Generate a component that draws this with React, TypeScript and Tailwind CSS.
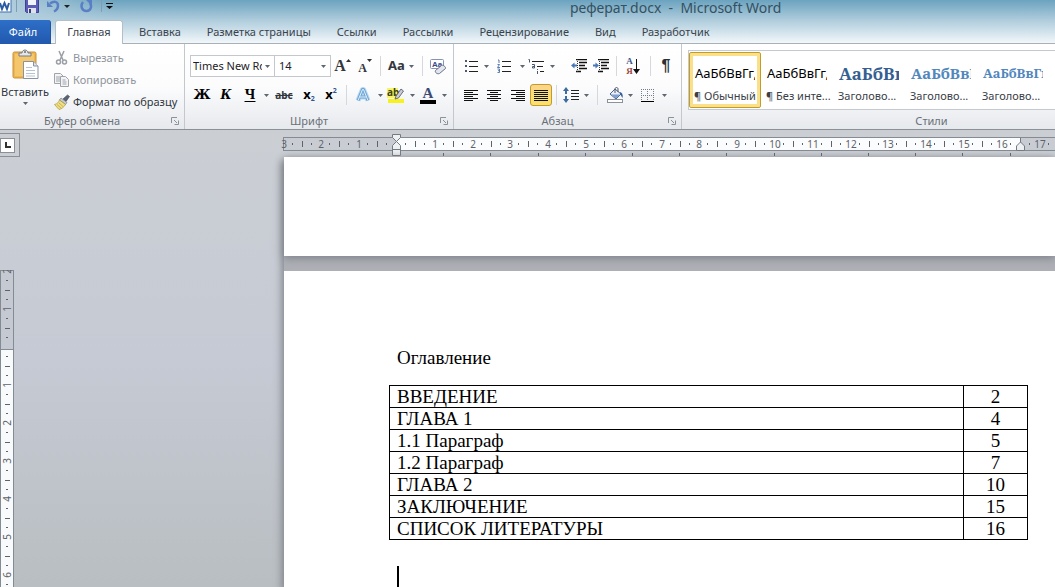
import type { ReactNode } from 'react';

const tabs = ['Вставка', 'Разметка страницы', 'Ссылки', 'Рассылки', 'Рецензирование', 'Вид', 'Разработчик'];

const tocRows = [
  { title: 'ВВЕДЕНИЕ', page: 2 },
  { title: 'ГЛАВА 1', page: 4 },
  { title: '1.1 Параграф', page: 5 },
  { title: '1.2 Параграф', page: 7 },
  { title: 'ГЛАВА 2', page: 10 },
  { title: 'ЗАКЛЮЧЕНИЕ', page: 15 },
  { title: 'СПИСОК ЛИТЕРАТУРЫ', page: 16 },
];

const plain = "text-[13px] text-black";
const styles = [
  { sample: 'АаБбВвГг,', label: '¶ Обычный', look: plain, active: true },
  { sample: 'АаБбВвГг,', label: '¶ Без инте...', look: plain, active: false },
  { sample: 'АаБбВв', label: 'Заголово...', look: "font-['Noto_Serif','DejaVu_Serif','Liberation_Serif',serif] text-[17px] font-bold text-[#365f91]", active: false },
  { sample: 'АаБбВвГ', label: 'Заголово...', look: "font-['Noto_Serif','DejaVu_Serif','Liberation_Serif',serif] text-[15px] font-bold text-[#5287bd]", active: false },
  { sample: 'АаБбВвГг', label: 'Заголово...', look: "font-['Noto_Serif','DejaVu_Serif','Liberation_Serif',serif] text-[13px] font-bold text-[#5287bd]", active: false },
];

function Caret() {
  return (
    <svg width="5" height="3" viewBox="0 0 5 3" className="shrink-0">
      <path d="M0 0h5L2.5 3z" fill="#5f666e" />
    </svg>
  );
}

function DropButton({ label }: { label: string }) {
  return (
    <button aria-label={label} className="flex h-6 w-2 shrink-0 items-center justify-center">
      <Caret />
    </button>
  );
}

function Tool({ label, width = 'w-6', active = false, children }: { label: string; width?: string; active?: boolean; children: ReactNode }) {
  return (
    <button
      aria-label={label}
      className={`flex h-[22px] shrink-0 items-center justify-center ${width} ${active ? 'rounded-[3px] border border-[#c29b29] bg-gradient-to-b from-[#fbd58b] to-[#fbe069]' : ''}`}
    >
      {children}
    </button>
  );
}

function Sep({ width = 'w-2' }: { width?: string }) {
  return (
    <div className={`flex shrink-0 justify-center ${width}`}>
      <div className="h-5 w-px bg-[#d5d9dd]" />
    </div>
  );
}

function Group({ title, className, launcher = true, children }: { title: string; className: string; launcher?: boolean; children: ReactNode }) {
  return (
    <section className={`flex shrink-0 flex-col border-r border-[#c3c8ce] ${className}`}>
      <div className="h-[70px]">{children}</div>
      <div className="flex h-4 items-center text-[#6a7078]">
        <h2 className="flex-1 text-center">{title}</h2>
        {launcher && (
          <button aria-label={`${title}: параметры`} className="flex w-5 justify-end pr-[5px]">
            <svg width="8" height="8" viewBox="0 0 8 8" fill="none" stroke="#8b929a">
              <path d="M.5 6V.5H6M3 3l3 3M7.5 3.5v4h-4" />
            </svg>
          </button>
        )}
      </div>
    </section>
  );
}

// rows of text in the alignment buttons: [x, width]
function AlignIcon({ lines }: { lines: number[][] }) {
  return (
    <svg width="14" height="13" viewBox="0 0 14 13" shapeRendering="crispEdges">
      {lines.map(([x, w], i) => (
        <rect key={i} x={x} y={i * 2 + 1} width={w} height="1" fill="#111" />
      ))}
    </svg>
  );
}

function PasteIcon() {
  return (
    <svg width="27" height="31" viewBox="0 0 27 31">
      <rect x="1" y="3" width="23" height="26" rx="1.5" fill="#efb752" stroke="#c98f36" />
      <rect x="3" y="5" width="19" height="22" fill="#f5c76c" />
      <path d="M7 7V4h3c0-4 6-4 6 0h3v3z" fill="#e4e6e8" stroke="#767b82" />
      <circle cx="13" cy="3" r="1" fill="#6c7076" />
      <path d="M11.5 12.500h10l4.500 4.500v12.500h-14.500z" fill="#fff" stroke="#8792a3" />
      <path d="M21.500 12.500v4.500h4.500" fill="#dde3ee" stroke="#8792a3" />
      <path d="M14 18.500h6M14 21.500h9M14 24.500h9M14 27h9" stroke="#b6c2d6" />
    </svg>
  );
}

function ClipboardGroup() {
  return (
    <Group title="Буфер обмена" className="w-[185px]">
      <div className="flex">
        <button className="flex w-[50px] flex-col items-center pt-[5px] text-[#2f353d]">
          <PasteIcon />
          <span className="h-[18px] pt-1 leading-4">Вставить</span>
          <span className="mt-1"><Caret /></span>
        </button>
        <div className="flex flex-col items-start pt-[3px] pl-1">
          <button className="flex h-[22px] items-center gap-[3px] text-[#8f959c]">
            <svg width="16" height="16" viewBox="0 0 16 16" fill="none" stroke="#9a9fa6" strokeWidth="1.5">
              <path d="M5 1l4 9M10 1L6 10" />
              <circle cx="4.500" cy="12" r="2" />
              <circle cx="10.500" cy="12" r="2" />
            </svg>
            Вырезать
          </button>
          <button className="flex h-[22px] items-center gap-[3px] text-[#8f959c]">
            <svg width="16" height="16" viewBox="0 0 16 16" fill="#f3f4f5" stroke="#a0a4aa">
              <path d="M.5 1.500h6l3 3v7h-9z" />
              <path d="M2 5h4M2 7h4M2 9h4" />
              <path d="M6.500 4.500h5l3 3v7h-8z" />
              <path d="M8.500 8h3M8.500 10h4M8.500 12h4" />
            </svg>
            Копировать
          </button>
          <button className="flex h-[22px] items-center gap-[3px] text-[#2f353d]">
            <svg width="16" height="16" viewBox="0 0 16 16">
              <path d="M9 5l4.500-4 2 1.500L12 7.500z" fill="#5a6274" stroke="#3e4350" strokeWidth=".6" />
              <path d="M7 4l6 4.500-1.500 2L5.500 6z" fill="#c7cbd2" stroke="#666b74" strokeWidth=".6" />
              <path d="M5.500 6l6 4.500C10 13 7.500 15 5 15.500L.5 10.500C3 10 4.500 8.500 5.500 6z" fill="#f0e084" stroke="#a8933c" strokeWidth=".7" />
              <path d="M3 10.500l4 3.500M5 9l4 3.500" stroke="#c0a744" strokeWidth=".8" />
            </svg>
            Формат по образцу
          </button>
        </div>
      </div>
    </Group>
  );
}

function FontGroup() {
  return (
    <Group title="Шрифт" className="w-[269px]">
      <div className="pt-[11px] pl-[5px] text-black">
        <div className="flex h-[22px] items-center">
          <label className="relative flex">
            <select aria-label="Шрифт" className="h-[22px] w-[85px] appearance-none overflow-hidden border border-[#c3c8ce] bg-white pr-3 pl-[2px] text-[11px] text-[#1d2126]">
              <option>Times New Roman</option>
            </select>
            <span className="pointer-events-none absolute top-[10px] right-[5px] flex"><Caret /></span>
          </label>
          <label className="relative flex">
            <select aria-label="Размер шрифта" className="h-[22px] w-14 appearance-none border border-l-0 border-[#c3c8ce] bg-white pr-3 pl-1 text-[11px] text-[#1d2126]">
              <option>14</option>
            </select>
            <span className="pointer-events-none absolute top-[10px] right-[5px] flex"><Caret /></span>
          </label>
          <Tool label="Увеличить размер" width="w-[23px]">
            <span className="font-['Liberation_Serif',serif] text-[16px] font-bold text-[#33373d]">A</span>
            <svg width="5" height="3" viewBox="0 0 5 3" className="mb-3"><path d="M0 3h5L2.500 0z" fill="#333" /></svg>
          </Tool>
          <Tool label="Уменьшить размер" width="w-[22px]">
            <span className="pt-1 font-['Liberation_Serif',serif] text-[12px] font-bold text-[#33373d]">A</span>
            <svg width="5" height="3" viewBox="0 0 5 3" className="mb-3"><path d="M0 0h5L2.500 3z" fill="#333" /></svg>
          </Tool>
          <Sep />
          <Tool label="Регистр" width="w-[34px]">
            <span className="mr-1 text-[13px] font-bold text-[#33373d]">Aa</span>
            <Caret />
          </Tool>
          <Sep />
          <Tool label="Очистить формат">
            <svg width="17" height="17" viewBox="0 0 17 17">
              <rect x=".5" y="1.500" width="13" height="9" rx="1" fill="#fff" stroke="#8792b5" />
              <text x="2" y="9" fontSize="8" fontWeight="bold" fontFamily="Liberation Sans" fill="#3b4a85">Aa</text>
              <path d="M5.500 12.500l6-5c1-1 4.500 1 4 3l-6 5c-2 1-5-1-4-3z" fill="#e3e6ef" stroke="#6b7386" />
            </svg>
          </Tool>
        </div>
        <div className="mt-[7px] flex h-[22px] items-center">
          <Tool label="Полужирный"><span className="font-['DejaVu_Serif','Liberation_Serif',serif] text-[13px] font-bold">Ж</span></Tool>
          <Tool label="Курсив"><span className="font-['DejaVu_Serif','Liberation_Serif',serif] text-[12px] font-bold italic">К</span></Tool>
          <Tool label="Подчеркнутый"><span className="font-['DejaVu_Serif','Liberation_Serif',serif] text-[12px] font-bold underline underline-offset-2">Ч</span></Tool>
          <DropButton label="Вид подчеркивания" />
          <Tool label="Зачеркнутый" width="w-7"><span className="text-[10px] font-bold text-[#33373d] line-through">abc</span></Tool>
          <Tool label="Подстрочный" width="w-[22px]">
            <span className="text-[13px] font-bold">x</span><span className="pt-2 text-[7px] font-bold text-[#30558f]">2</span>
          </Tool>
          <Tool label="Надстрочный" width="w-[22px]">
            <span className="text-[13px] font-bold">x</span><span className="pb-2 text-[7px] font-bold text-[#30558f]">2</span>
          </Tool>
          <Sep />
          <Tool label="Эффекты текста" width="w-[26px]">
            <svg width="16" height="16" viewBox="0 0 16 16" fill="none" strokeLinejoin="round">
              <path d="M3 13.500L7.500 2.500h1L13 13.500M5 10h6" stroke="#b9d8f1" strokeWidth="5" />
              <path d="M3 13.500L7.500 2.500h1L13 13.500M5 10h6" stroke="#6aa5d6" strokeWidth="3" />
              <path d="M3 13.500L7.500 2.500h1L13 13.500M5 10h6" stroke="#e6f2fb" strokeWidth="1" />
            </svg>
          </Tool>
          <DropButton label="Варианты эффектов" />
          <Tool label="Выделение цветом">
            <svg width="18" height="17" viewBox="0 0 18 17">
              <rect x="1" y="12" width="16" height="4" fill="#f8f21c" />
              <rect y="1" width="11" height="10" fill="#f8f56a" />
              <text x="0" y="9" fontSize="10" fontWeight="bold" fontFamily="Noto Sans" fill="#3d4414">ab</text>
              <path d="M9 9l5-7 2.500 2-5 7-3.500 1z" fill="#c9ccd3" stroke="#4c5260" strokeWidth=".8" />
            </svg>
          </Tool>
          <DropButton label="Цвет выделения" />
          <Tool label="Цвет текста">
            <span className="flex flex-col items-center">
              <span className="font-['Liberation_Serif',serif] text-[15px] leading-3 font-bold text-[#3c4a74]">A</span>
              <span className="mt-px h-1 w-4 bg-black" />
            </span>
          </Tool>
          <DropButton label="Выбор цвета текста" />
        </div>
      </div>
    </Group>
  );
}

function ParagraphGroup() {
  return (
    <Group title="Абзац" className="w-[228px]">
      <div className="pt-[11px] pl-[6px]">
        <div className="flex h-[22px] items-center">
          <Tool label="Маркеры" width="w-[22px]">
            <svg width="14" height="14" viewBox="0 0 14 14" shapeRendering="crispEdges">
              <path d="M1 1h2v2H1zM1 6h2v2H1zM1 11h2v2H1z" fill="#4a5876" />
              <path d="M5 2h9M5 7h9M5 12h9" stroke="#222" />
            </svg>
          </Tool>
          <DropButton label="Вид маркеров" />
          <Tool label="Нумерация" width="w-7">
            <svg width="14" height="14" viewBox="0 0 14 14" fill="none">
              <path d="M1 1h1v3M.5 5.500h2l-2 3h2.500M.5 10h2v3.500h-2M1 11.700h1.500" stroke="#4a6ea5" strokeWidth=".9" />
              <path d="M5 2.500h9M5 7.500h9M5 12.500h9" stroke="#222" />
            </svg>
          </Tool>
          <DropButton label="Вид нумерации" />
          <Tool label="Многоуровневый список" width="w-[22px]">
            <svg width="18" height="16" viewBox="0 0 18 16" fill="none">
              <path d="M.5 1.500h1v3M4 6.500h2.500V10H4.500V8.500h2M9.500 11v1M9.500 13v3" stroke="#4a5876" />
              <path d="M4 3.500h12M9 8.500h6M12 13.500h4" stroke="#222" />
            </svg>
          </Tool>
          <DropButton label="Вид списка" />
          <Tool label="Уменьшить отступ" width="ml-3 w-[22px]">
            <svg width="16" height="14" viewBox="0 0 16 14" fill="none">
              <path d="M5 .5h11M8 3.500h8M8 6.500h6M8 9.500h8M5 12.500h5" stroke="#111" strokeWidth="1.500" />
              <path d="M6.500 0v14" stroke="#333" strokeDasharray="1 1" />
              <path d="M0 6.500L3.500 3.500v2H6v2H3.500v2z" fill="#4778b8" />
            </svg>
          </Tool>
          <Tool label="Увеличить отступ" width="w-[22px]">
            <svg width="16" height="14" viewBox="0 0 16 14" fill="none">
              <path d="M5 .5h11M8 3.500h8M8 6.500h6M8 9.500h8M5 12.500h5" stroke="#111" strokeWidth="1.500" />
              <path d="M6.500 0v14" stroke="#333" strokeDasharray="1 1" />
              <path d="M6 6.500L2.500 3.500v2H0v2h2.500v2z" fill="#4778b8" />
            </svg>
          </Tool>
          <Sep />
          <Tool label="Сортировка" width="w-[26px]">
            <span className="flex flex-col font-['Liberation_Serif',serif] text-[9px] leading-[10px] font-bold">
              <span className="text-[#3e5486]">А</span>
              <span className="text-[#9c4640]">Я</span>
            </span>
            <svg width="7" height="15" viewBox="0 0 7 15"><path d="M3 0h1v10h3L3.500 15 0 10h3z" fill="#111" /></svg>
          </Tool>
          <Sep />
          <Tool label="Все знаки"><span className="font-['Liberation_Sans',sans-serif] text-[16px] font-bold text-[#2b2f36]">¶</span></Tool>
        </div>
        <div className="mt-[7px] flex h-[22px] items-center">
          <Tool label="По левому краю" width="w-[22px]"><AlignIcon lines={[[0, 14], [0, 9], [0, 14], [0, 9], [0, 14], [0, 9]]} /></Tool>
          <Tool label="По центру"><AlignIcon lines={[[0, 14], [3, 8], [0, 14], [3, 8], [0, 14], [3, 8]]} /></Tool>
          <Tool label="По правому краю"><AlignIcon lines={[[0, 14], [5, 9], [0, 14], [5, 9], [0, 14], [5, 9]]} /></Tool>
          <Tool label="По ширине" width="w-[22px]" active><AlignIcon lines={[[0, 14], [0, 14], [0, 14], [0, 14], [0, 14], [0, 14]]} /></Tool>
          <Sep />
          <Tool label="Интервал" width="w-[22px]">
            <svg width="16" height="16" viewBox="0 0 16 16" fill="none">
              <path d="M3 0l3 4H4v3H2V4H0zM3 16l3-4H4V9H2v3H0z" fill="#3f6a9e" />
              <path d="M8 3.500h8M8 6.500h8M8 9.500h8M8 12.500h8" stroke="#222" />
            </svg>
          </Tool>
          <DropButton label="Размер интервала" />
          <Sep width="w-[14px]" />
          <Tool label="Заливка" width="w-[22px]">
            <svg width="17" height="16" viewBox="0 0 17 16">
              <path d="M3 7l5-5 6 5-5 5z" fill="#e9eef7" stroke="#4e628f" />
              <path d="M4 7.500h9L9 11.500z" fill="#7e9fd0" />
              <path d="M8 6V2c0-2 3-2 3 0v3" fill="none" stroke="#50566a" />
              <path d="M13 5c3 1 3 4 2.500 6-1-1-1.500-3-2.500-4z" fill="#355f9f" />
              <rect x=".5" y="12.500" width="15" height="3" fill="#fff" stroke="#8b929a" />
            </svg>
          </Tool>
          <DropButton label="Цвет заливки" />
          <Tool label="Границы" width="w-[26px]">
            <svg width="13" height="13" viewBox="0 0 13 13" fill="none" shapeRendering="crispEdges">
              <path d="M0 .5h13M0 6.500h13M.5 0v12M6.500 0v12M12.500 0v12" stroke="#777d85" strokeDasharray="1 1" />
              <path d="M0 12.500h13" stroke="#000" />
            </svg>
          </Tool>
          <DropButton label="Вид границ" />
        </div>
      </div>
    </Group>
  );
}

function StylesGroup() {
  return (
    <Group title="Стили" className="min-w-[500px] flex-1" launcher={false}>
      <div className="pt-[6px] pl-[6px]">
        <div className="flex h-[60px] border-y border-l border-[#c5cad0] bg-white py-px">
          {styles.map((s, i) => (
            <button
              key={i}
              className={`flex h-14 w-[72px] shrink-0 flex-col overflow-hidden rounded-[2px] border pl-1 text-left whitespace-nowrap ${s.active ? 'border-[#c29b29] shadow-[inset_0_0_0_3px_#fbe08a]' : 'border-transparent'}`}
            >
              <span className={`flex h-8 w-[61px] shrink-0 items-center overflow-hidden pt-[9px] pl-px ${s.look}`}>{s.sample}</span>
              <span className="pt-px leading-5 text-[#3b4047]">{s.label}</span>
            </button>
          ))}
        </div>
      </div>
    </Group>
  );
}

const CM = 37.8;

function HorizontalRuler() {
  const zero = 112;
  const marks = Array.from({ length: 22 }, (_, i) => i - 3);
  return (
    <svg className="h-6 w-full overflow-visible" aria-hidden="true">
      <rect x="0" y="5" width="100%" height="13" fill="#c9cdd3" />
      <rect x={zero} y="5" width="624" height="13" fill="#fbfcfd" />
      <path d="M0 4.500h2000M0 17.500h2000M-.5 4v14" stroke="#858b92" />
      {marks.map((n) => {
        const x = Math.round(zero + n * CM);
        return (
          <g key={n} fill="#5d636b">
            {n !== 0 && <text x={x + 1} y="15" fontSize="10" textAnchor="middle">{Math.abs(n)}</text>}
            <rect x={x + 9} y="10" width="1" height="2" />
            <rect x={x + 19} y="8" width="1" height="6" />
            <rect x={x + 28} y="10" width="1" height="2" />
            {n > -1 && <rect x={Math.round(zero + (n + 1) * 47.2)} y="20" width="1" height="3" />}
          </g>
        );
      })}
      <path d="M108.500 1.500h8v3l-4 4 4 4v10h-8v-10l4-4-4-4zM108.500 16.500h8" fill="#eef0f2" stroke="#747a82" />
      <path d="M736.500 5v4l4 4v4.500h-8V13l4-4" fill="#eef0f2" stroke="#747a82" />
    </svg>
  );
}

function VerticalRuler() {
  const marks = [-2, -1, 0, 1, 2, 3, 4, 5, 6];
  return (
    <svg className="min-h-0 w-[14px] flex-1" aria-hidden="true">
      <rect width="14" height="79" fill="#c5c9d1" />
      <rect y="79" width="14" height="100%" fill="#f8fafb" />
      <path d="M0 .5h14M0 79.500h14M13.500 0v2000M.5 0v2000" stroke="#858b92" />
      {marks.map((n) => {
        const y = 77 + n * 38;
        return (
          <g key={n} fill="#5d636b">
            {n !== 0 && (
              <text fontSize="10" textAnchor="middle" transform={`translate(11 ${y}) rotate(-90)`}>{Math.abs(n)}</text>
            )}
            <rect x="6" y={y + 9} width="2" height="1" />
            <rect x="5" y={y + 19} width="5" height="1" />
            <rect x="6" y={y + 28} width="2" height="1" />
          </g>
        );
      })}
    </svg>
  );
}

export default function App() {
  return (
    <div className="flex h-screen flex-col overflow-hidden bg-[#c9cdd3] font-['Noto_Sans','Open_Sans',sans-serif] text-[11px]">
      <header className="h-11 shrink-0 border-b border-[#a9b1b8] bg-gradient-to-b from-[#6ba3bf] via-[#b3cfde] to-[#f2f7fa]">
        <div className="flex h-5 items-start">
          <div className="flex h-5 w-[115px] shrink-0 items-start bg-gradient-to-r from-[#b5d0df] to-transparent">
            <svg width="12" height="13" viewBox="0 0 12 13">
              <rect x="-1" y="-1" width="12" height="13" fill="#fff" stroke="#3e71b0" />
              <path d="M0 3l2 6 2.500-6L7 9l2-6" fill="none" stroke="#2a5ca3" strokeWidth="2" />
            </svg>
            <div className="ml-1 h-3 w-px bg-[#7e9fb3]" />
            <button aria-label="Сохранить" className="ml-2">
              <svg width="14" height="13" viewBox="0 0 14 13">
                <path d="M.5-1h13v13.500H1.500l-1-1z" fill="#5a5cb5" stroke="#40428f" />
                <rect x="3" y="-1" width="8" height="6" fill="#f1f3fb" />
                <rect x="3" y="8" width="8" height="5" fill="#dfe2ee" />
                <rect x="4" y="9" width="2" height="4" fill="#3c3e7c" />
              </svg>
            </button>
            <button aria-label="Отменить" className="ml-2">
              <svg width="13" height="13" viewBox="0 0 13 13" fill="none">
                <path d="M3 3.500c4-3 8-2 8 2 0 3-2 5-4 6" stroke="#5a7fc6" strokeWidth="2.500" />
                <path d="M0 1v6h6z" fill="#5a7fc6" />
              </svg>
            </button>
            <button aria-label="Список отмены" className="ml-1 flex h-3 w-2 items-center">
              <svg width="6" height="3" viewBox="0 0 6 3"><path d="M0 0h6L3 3z" fill="#222" /></svg>
            </button>
            <button aria-label="Повторить" className="ml-2">
              <svg width="13" height="13" viewBox="0 0 13 13" fill="none">
                <path d="M3 2c-3 4-1 9 3.500 9S12 6 10 3" stroke="#5a7fc6" strokeWidth="2.500" />
                <path d="M6 0h6v6z" fill="#5a7fc6" />
              </svg>
            </button>
            <div className="ml-2 h-3 w-px bg-[#7e9fb3]" />
            <button aria-label="Настройка панели" className="ml-1 flex h-3 items-center">
              <svg width="7" height="6" viewBox="0 0 7 6"><path d="M0 0h7v1H0zM0 3h7L3.500 6z" fill="#111" /></svg>
            </button>
          </div>
          <h1 className="flex-1 pl-[455px] text-[14px] leading-4 whitespace-pre text-[#35505f]">{'реферат.docx  -  Microsoft Word'}</h1>
        </div>
        <nav className="flex h-6 items-stretch text-[#3a434c]">
          <button className="w-[51px] shrink-0 rounded-tr-[3px] border-r border-[#2453a0] bg-gradient-to-b from-[#2e6fc8] to-[#2159ae] pr-1 text-white">Файл</button>
          <button className="mr-[3px] ml-1 w-[68px] shrink-0 rounded-t-[3px] border border-b-0 border-[#b4bec6] bg-white">Главная</button>
          {tabs.map((t) => (
            <button key={t} className="shrink-0 px-[13px]">{t}</button>
          ))}
        </nav>
      </header>

      <div className="flex h-[86px] shrink-0 overflow-hidden border-b border-[#8b9097] bg-gradient-to-b from-white via-[#fcfcfd] to-[#e6e9ed]">
        <ClipboardGroup />
        <FontGroup />
        <ParagraphGroup />
        <StylesGroup />
      </div>

      <main className="flex min-h-0 flex-1 bg-gradient-to-b from-[#cbcfd4] via-[#c6cad4] to-[#b9bec2]">
        <div className="flex w-[284px] shrink-0 flex-col">
          <div className="flex h-[27px] items-end">
            <div className="flex h-6 w-5 items-center border border-l-0 border-[#8b9097]">
              <button aria-label="Тип табуляции" className="flex size-[15px] items-center justify-center border border-[#8b9097] bg-white">
                <svg width="6" height="6" viewBox="0 0 6 6"><path d="M0 0h2v4h4v2H0z" fill="#333" /></svg>
              </button>
            </div>
          </div>
          <div className="mt-[113px] flex min-h-0 flex-1 flex-col"><VerticalRuler /></div>
        </div>

        <div className="flex min-w-0 flex-1 flex-col">
          <div className="flex h-[27px] shrink-0 items-end"><HorizontalRuler /></div>
          <div className="flex flex-1 flex-col gap-[15px] bg-[#adafb5] shadow-[-2px_4px_8px_#7d8088]">
            <div className="h-[99px] shrink-0 bg-white shadow-[0_2px_8px_#7d8088]" />
            <article className="flex-1 bg-white pt-[76px] pl-[105px] font-['Liberation_Serif',serif] text-[19px] leading-[22px] text-black">
              <p className="pl-2">Оглавление</p>
              <table className="mt-4 w-[639px] border-collapse">
                <tbody>
                  {tocRows.map((row) => (
                    <tr key={row.title} className="h-[22px]">
                      <td className="border border-black p-0 pl-[7px] leading-[21px]">{row.title}</td>
                      <td className="w-16 border border-black p-0 text-center leading-[21px]">{row.page}</td>
                    </tr>
                  ))}
                </tbody>
              </table>
              <div className="mt-[26px] ml-2 h-[22px] w-[2px] bg-black" />
            </article>
          </div>
        </div>
      </main>
    </div>
  );
}
